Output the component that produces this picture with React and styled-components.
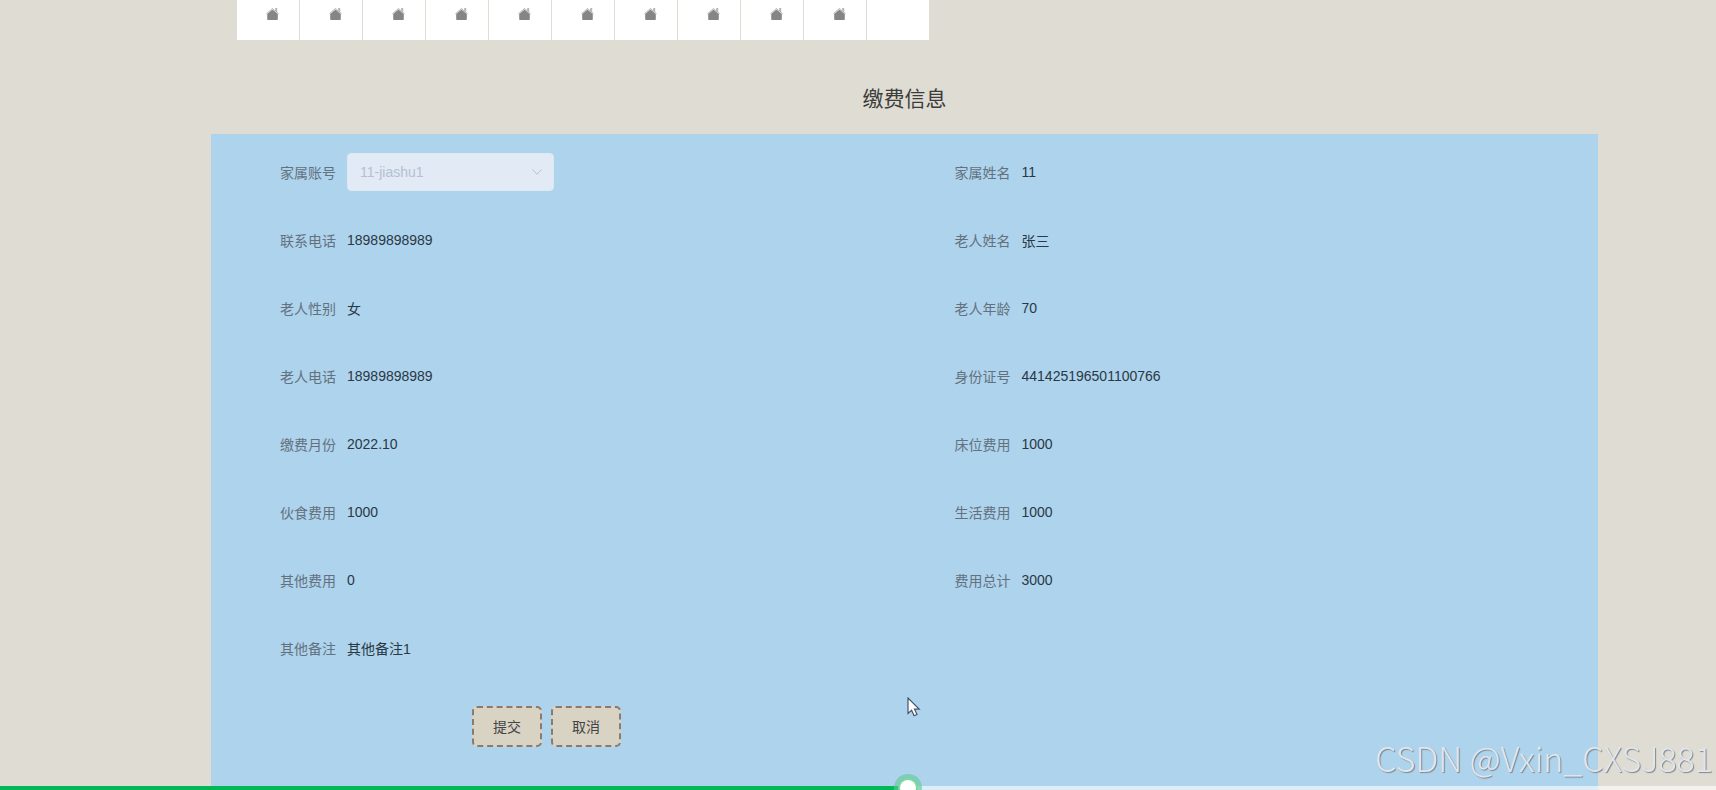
import React, { useState } from 'react'
import styled, { createGlobalStyle } from 'styled-components'

const GlobalStyle = createGlobalStyle`
    * { box-sizing: border-box; }
    body {
        margin: 0;
        background: #dfdcd3;
        font-family: "Liberation Sans", "Noto Sans CJK SC", sans-serif;
        font-size: 14px;
        color: #2c3a48;
    }
    `
const Page = styled.div`
    position: relative;
    display: flex;
    flex-direction: column;
    min-height: 100vh;
    padding: 0 118px 0 211px;
    overflow: hidden;
    `
const TopMenu = styled.nav`
    display: flex;
    gap: 1px;
    height: 40px;
    margin-left: 26px;
    `
const MenuLink = styled.a`
    flex: 0 0 62px;
    padding: 7px 0 0 29px;
    background: #fff;
    color: #858585;
    `
const Title = styled.h2`
    margin: 44px 0 20px;
    font-size: 21px;
    line-height: 30px;
    font-weight: 400;
    text-align: center;
    color: #3c3c3c;
    `
const Panel = styled.form`
    flex: 1;
    padding: 19px;
    background: #aed3ec;
    `
const Fields = styled.div`
    display: grid;
    grid-template-columns: 1fr 1fr;
    row-gap: 30px;
    `
const Item = styled.div`
    grid-column: ${props => props.$first ? '1' : 'auto'};
    display: flex;
    align-items: center;
    gap: 11px;
    height: 38px;
    `
const Label = styled.label`
    width: 106px;
    text-align: right;
    color: #63717f;
    `
const Value = styled.output`
    color: #2a3846;
    `
const SelectBox = styled.div`
    position: relative;
    width: 207px;
    color: #b4c1d0;
    & select {
        appearance: none;
        width: 100%;
        height: 38px;
        padding: 0 36px 0 12px;
        border: 1px solid #dce8f4;
        border-radius: 4px;
        background: #e1eaf5;
        font: inherit;
        color: inherit;
        opacity: 1;
    }
    & svg {
        position: absolute;
        right: 11px;
        top: 13px;
    }
    `
const Actions = styled.div`
    display: flex;
    gap: 9px;
    margin: 39px 0 0 242px;
    `
const ActionButton = styled.button`
    width: 70px;
    height: 41px;
    padding: 0 0 2px;
    border: 2px dashed #8a7a70;
    border-radius: 5px;
    background: #d9d3c4;
    font: inherit;
    color: #444;
    cursor: pointer;
    `
const Watermark = styled.div`
    position: fixed;
    right: 3px;
    bottom: 10px;
    font-family: "Noto Sans CJK SC", sans-serif;
    font-size: 34px;
    line-height: 44px;
    font-weight: 300;
    color: #e2e6ea;
    text-shadow: 1px 1px 1px #7d8790;
    pointer-events: none;
    `
const Progress = styled.input`
    appearance: none;
    position: fixed;
    left: 0;
    bottom: 0;
    width: 100%;
    height: 4px;
    margin: 0;
    background: linear-gradient(to right, #00b956 var(--played), rgba(255, 255, 255, 0.6) var(--played));
    &::-webkit-slider-thumb {
        appearance: none;
        width: 16px;
        height: 16px;
        border-radius: 50%;
        background: #fff;
        box-shadow: 0 0 0 2px #79dba0, 0 0 0 6px rgba(95, 200, 150, 0.6);
    }
    `
const Pointer = styled.svg`
    position: absolute;
    left: 53%;
    top: 697px;
    margin-left: -2px;
    `

const HomeIcon = () => (
    <svg width="13" height="13" viewBox="0 0 13 13" fill="currentColor" aria-hidden="true">
        <path d="M6.5 2.6 11.8 7v5.2a.8.8 0 0 1-.8.8H2a.8.8 0 0 1-.8-.8V7z" />
        <path d="M.3 6.9 6.5 1.5l6.2 5.4" fill="none" stroke="currentColor" strokeWidth="1" opacity="0.6" />
        <path d="M9.2 1h2v4.4L9.2 3.6z" opacity="0.6" />
    </svg>
)

const menu = ['首页', '公告', '家属', '老人', '床位', '护理', '健康', '缴费', '活动', '留言']

const fields = [
    ['家属姓名', '11'],
    ['联系电话', '18989898989'],
    ['老人姓名', '张三'],
    ['老人性别', '女'],
    ['老人年龄', '70'],
    ['老人电话', '18989898989'],
    ['身份证号', '441425196501100766'],
    ['缴费月份', '2022.10'],
    ['床位费用', '1000'],
    ['伙食费用', '1000'],
    ['生活费用', '1000'],
    ['其他费用', '0'],
    ['费用总计', '3000'],
    ['其他备注', '其他备注1'],
]

const App = () => {
    const [ played, setPlayed ] = useState(5294)
    return (
        <Page>
            <GlobalStyle />
            <TopMenu>
                { menu.map(name => <MenuLink key={name} href="#" aria-label={name}><HomeIcon /></MenuLink>) }
                <MenuLink href="#" aria-label="更多" />
            </TopMenu>
            <Title>缴费信息</Title>
            <Panel onSubmit={ (e) => e.preventDefault() }>
                <Fields>
                    <Item>
                        <Label htmlFor="account">家属账号</Label>
                        <SelectBox>
                            <select id="account" disabled>
                                <option>11-jiashu1</option>
                            </select>
                            <svg width="12" height="12" viewBox="0 0 12 12" fill="none" stroke="currentColor">
                                <path d="M1.5 3.5 6 8.2l4.5-4.7" />
                            </svg>
                        </SelectBox>
                    </Item>
                    { fields.map(([ label, value ], i) => (
                        <Item key={label} $first={i % 2 === 1}>
                            <Label htmlFor={`field-${i}`}>{label}</Label>
                            <Value id={`field-${i}`}>{value}</Value>
                        </Item>
                    )) }
                </Fields>
                <Actions>
                    <ActionButton type="submit">提交</ActionButton>
                    <ActionButton type="button">取消</ActionButton>
                </Actions>
            </Panel>
            <Pointer width="14" height="20" viewBox="0 0 14 20" aria-hidden="true">
                <path d="M1 1v15.5l3.6-3.3 2.5 5.6 2.9-1.3-2.5-5.3h4.7z" fill="#fff" stroke="#46536b" strokeWidth="1.2" />
            </Pointer>
            <Progress
                type="range" aria-label="播放进度"
                min="0" max="10000"
                value={played}
                onChange={(e) => setPlayed(Number(e.target.value))}
                style={{ '--played': `${played / 100}%` }}
                />
            <Watermark>CSDN @Vxin_CXSJ881</Watermark>
        </Page>
    )
}

export default App
